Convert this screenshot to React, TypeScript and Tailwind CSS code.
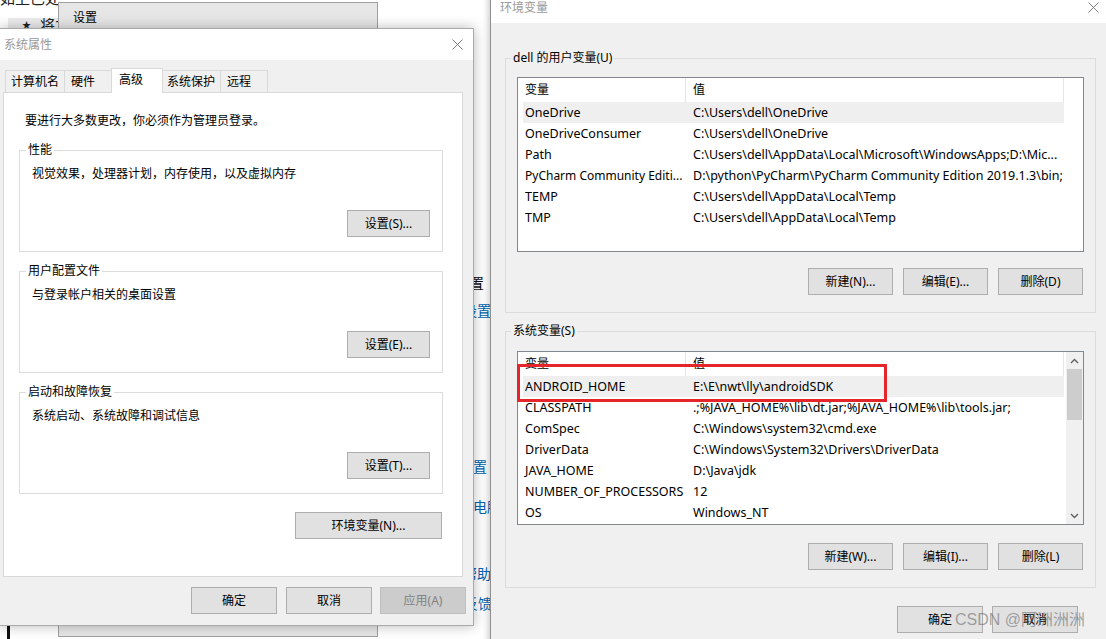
import React from 'react';

type Row = [string, string];

const userVars: Row[] = [
  ['OneDrive', 'C:\\Users\\dell\\OneDrive'],
  ['OneDriveConsumer', 'C:\\Users\\dell\\OneDrive'],
  ['Path', 'C:\\Users\\dell\\AppData\\Local\\Microsoft\\WindowsApps;D:\\Mic...'],
  ['PyCharm Community Editi...', 'D:\\python\\PyCharm\\PyCharm Community Edition 2019.1.3\\bin;'],
  ['TEMP', 'C:\\Users\\dell\\AppData\\Local\\Temp'],
  ['TMP', 'C:\\Users\\dell\\AppData\\Local\\Temp'],
];

const sysVars: Row[] = [
  ['ANDROID_HOME', 'E:\\E\\nwt\\lly\\androidSDK'],
  ['CLASSPATH', '.;%JAVA_HOME%\\lib\\dt.jar;%JAVA_HOME%\\lib\\tools.jar;'],
  ['ComSpec', 'C:\\Windows\\system32\\cmd.exe'],
  ['DriverData', 'C:\\Windows\\System32\\Drivers\\DriverData'],
  ['JAVA_HOME', 'D:\\Java\\jdk'],
  ['NUMBER_OF_PROCESSORS', '12'],
  ['OS', 'Windows_NT'],
];

const tabs = [
  { t: '计算机名', c: 'w-[60px] pl-[5px]', sel: false },
  { t: '硬件', c: 'w-[48px] pl-[6px]', sel: false },
  { t: '高级', c: 'w-[52px] pl-[7px]', sel: true },
  { t: '系统保护', c: 'w-[59px] pl-[4px]', sel: false },
  { t: '远程', c: 'w-[48px] pl-[6px]', sel: false },
];

function CloseX() {
  return (
    <svg width="11" height="11" viewBox="0 0 11 11" className="block">
      <path d="M0.5 0.5L10.5 10.5M10.5 0.5L0.5 10.5" stroke="#7d7d7d" strokeWidth="1" fill="none" />
    </svg>
  );
}

function Btn({
  w,
  children,
  disabled = false,
  className = '',
}: {
  w: string;
  children: React.ReactNode;
  disabled?: boolean;
  className?: string;
}) {
  return (
    <div
      className={`${w} h-[27px] shrink-0 flex items-center justify-center border leading-[16px] whitespace-nowrap ${
        disabled ? 'border-[#bfbfbf] bg-[#cccccc] text-[#838383]' : 'border-[#adadad] bg-[#e1e1e1] text-black'
      } ${className}`}
    >
      {children}
    </div>
  );
}

function Group({
  label,
  labelCls,
  className,
  children,
}: {
  label: string;
  labelCls: string;
  className: string;
  children: React.ReactNode;
}) {
  return (
    <div className={`relative shrink-0 border border-[#dcdcdc] flex flex-col ${className}`}>
      <span className={`absolute -top-[9px] px-[2px] leading-[16px] whitespace-nowrap ${labelCls}`}>{label}</span>
      {children}
    </div>
  );
}

function Chevron({ up }: { up: boolean }) {
  return (
    <svg width="9" height="6" viewBox="0 0 9 6" className="block">
      <path d={up ? 'M1 5L4.5 1.5L8 5' : 'M1 1L4.5 4.5L8 1'} stroke="#606060" strokeWidth="1.4" fill="none" />
    </svg>
  );
}

function Scrollbar() {
  return (
    <div className="w-[17px] shrink-0 flex flex-col bg-[#f0f0f0]">
      <div className="h-[17px] flex items-center justify-center">
        <Chevron up />
      </div>
      <div className="mx-[1px] h-[51px] bg-[#cdcdcd]" />
      <div className="flex-1" />
      <div className="h-[17px] flex items-center justify-center">
        <Chevron up={false} />
      </div>
    </div>
  );
}

function ListView({ rows, h, scroll = false }: { rows: Row[]; h: string; scroll?: boolean }) {
  return (
    <div className={`w-[567px] ${h} shrink-0 border border-[#828790] bg-white flex overflow-hidden`}>
      <div className="w-[548px] shrink-0 flex flex-col">
        <div className="h-[24px] flex shrink-0">
          <div className="w-[168px] pl-[7px] flex items-center border-r border-[#e5e5e5]">变量</div>
          <div className="w-[378px] pl-[7px] flex items-center border-r border-[#e5e5e5]">值</div>
        </div>
        {rows.map(([k, v], i) => (
          <div
            key={k}
            className={`ml-[5px] w-[541px] h-[21px] shrink-0 flex items-center ${i === 0 ? 'bg-[#efefef]' : ''}`}
          >
            <div
              className={`w-[163px] shrink-0 pl-[2px] whitespace-nowrap overflow-hidden ${
                k.endsWith('...') ? 'text-[12px]' : 'text-[12.5px]'
              }`}
            >
              {k}
            </div>
            <div className="w-[378px] shrink-0 pl-[7px] whitespace-nowrap overflow-hidden text-[12.5px]">{v}</div>
          </div>
        ))}
      </div>
      {scroll && <Scrollbar />}
    </div>
  );
}

function SysGroup({ label, text, btn, first = false }: { label: string; text: string; btn: string; first?: boolean }) {
  return (
    <Group
      label={label}
      labelCls="left-[6px] bg-white"
      className={`ml-[15px] w-[424px] h-[102px] ${first ? 'mt-[21px]' : 'mt-[19px]'}`}
    >
      <div className="pl-[12px] pt-[15px] leading-[16px]">{text}</div>
      <Btn w="w-[83px]" className="self-end mr-[12px] mt-[28px]">
        {btn}
      </Btn>
    </Group>
  );
}

export default function App() {
  return (
    <div className="relative w-[1106px] h-[639px] overflow-hidden bg-white font-['Noto_Sans','Noto_Sans_CJK_SC',sans-serif] text-[12px] leading-[16px] text-black">
      {/* desktop background fragments */}
      <div className="absolute left-0 top-[-10px] text-[15px] leading-[16px] text-[#222] whitespace-nowrap">如上已处</div>
      <div className="absolute left-[8px] top-[18px] w-[60px] h-[14px] bg-[#ebebeb] flex items-center pl-[14px] gap-[9px] text-[15px] leading-[16px] text-[#222] whitespace-nowrap">
        <span className="text-[9px]">★</span>
        <span>将才</span>
      </div>
      <div className="absolute left-[7px] top-[600px] w-[3px] h-[39px] bg-[#111]" />

      {/* 设置 window behind */}
      <div className="absolute left-[58px] top-[2px] w-[320px] h-[635px] bg-[#e6e6e6] border border-[#a0a0a0]">
        <div className="h-[30px] pl-[14px] flex items-center">设置</div>
      </div>

      {/* settings page behind (links) */}
      <div className="absolute left-[378px] top-0 w-[132px] h-[639px] flex flex-col items-end whitespace-nowrap">
        <div className="mt-[273px] mr-[26px] h-[20px] leading-[20px] text-[15px] text-[#111]">相关设置</div>
        <div className="mt-[8px] mr-[19px] h-[20px] leading-[20px] text-[14px] text-[#0063b1]">BitLocker 设置</div>
        <div className="mt-[136px] mr-[23px] h-[20px] leading-[20px] text-[14px] text-[#0063b1]">高级系统设置</div>
        <div className="mt-[20px] mr-[9px] h-[20px] leading-[20px] text-[14px] text-[#0063b1]">重命名这台电脑</div>
        <div className="mt-[47px] mr-[19px] h-[20px] leading-[20px] text-[14px] text-[#0063b1]">获取帮助</div>
        <div className="mt-[10px] mr-[18px] h-[20px] leading-[20px] text-[14px] text-[#0063b1]">提供反馈</div>
      </div>

      {/* 系统属性 window */}
      <div className="absolute left-[-1px] top-[28px] w-[475px] h-[598px] border border-[#aaaaaa] bg-[#f0f0f0] flex flex-col shadow-[0_0_12px_rgba(0,0,0,0.28)]">
        <div className="h-[31px] shrink-0 bg-white flex items-center justify-between pl-[4px] pr-[10px]">
          <span className="text-[#999999]">系统属性</span>
          <CloseX />
        </div>
        <div className="pt-[8px] flex flex-col">
          <div className="relative z-10 flex items-end h-[24px] pl-[5px]">
            {tabs.map((tb, i) =>
              tb.sel ? (
                <div
                  key={tb.t}
                  className={`${tb.c} ${i > 0 ? '-ml-px' : ''} h-[25px] mb-[-1px] pb-[2px] bg-white border border-b-0 border-[#d9d9d9] flex items-center relative z-10`}
                >
                  {tb.t}
                </div>
              ) : (
                <div
                  key={tb.t}
                  className={`${tb.c} ${i > 0 ? '-ml-px' : ''} h-[22px] bg-[#f0f0f0] border border-b-0 border-[#d9d9d9] flex items-center`}
                >
                  {tb.t}
                </div>
              )
            )}
          </div>
          <div className="ml-[3px] w-[460px] h-[485px] shrink-0 border border-[#d9d9d9] bg-white flex flex-col">
            <div className="ml-[21px] mt-[20px] leading-[16px]">要进行大多数更改，你必须作为管理员登录。</div>
            <SysGroup first label="性能" text="视觉效果，处理器计划，内存使用，以及虚拟内存" btn="设置(S)..." />
            <SysGroup label="用户配置文件" text="与登录帐户相关的桌面设置" btn="设置(E)..." />
            <SysGroup label="启动和故障恢复" text="系统启动、系统故障和调试信息" btn="设置(T)..." />
            <Btn w="w-[147px]" className="self-end mr-[20px] mt-[18px]">
              环境变量(N)...
            </Btn>
          </div>
          <div className="mt-[10px] flex pl-[191px]">
            <Btn w="w-[86px]">确定</Btn>
            <Btn w="w-[86px]" className="ml-[9px]">
              取消
            </Btn>
            <Btn w="w-[86px]" className="ml-[8px]" disabled>
              应用(A)
            </Btn>
          </div>
        </div>
      </div>

      {/* 环境变量 window */}
      <div className="absolute left-[490px] top-[-8px] w-[616px] h-[660px] border-l border-[#8f8f8f] bg-[#f0f0f0] flex flex-col shadow-[-2px_0_6px_rgba(0,0,0,0.2)]">
        <div className="h-[31px] shrink-0 bg-white flex items-center justify-between pl-[9px] pr-[7px]">
          <span className="text-[#999999]">环境变量</span>
          <CloseX />
        </div>
        <div className="flex flex-col pl-[14px]">
          <Group label="dell 的用户变量(U)" labelCls="left-[5px] bg-[#f0f0f0]" className="mt-[35px] w-[591px] h-[255px] pl-[11px] pt-[18px]">
            <ListView rows={userVars} h="h-[175px]" />
            <div className="mt-[16px] ml-[291px] flex">
              <Btn w="w-[85px]">新建(N)...</Btn>
              <Btn w="w-[85px]" className="ml-[10px]">
                编辑(E)...
              </Btn>
              <Btn w="w-[85px]" className="ml-[10px]">
                删除(D)
              </Btn>
            </div>
          </Group>
          <Group label="系统变量(S)" labelCls="left-[5px] bg-[#f0f0f0]" className="mt-[18px] w-[591px] h-[257px] pl-[11px] pt-[19px]">
            <ListView rows={sysVars} h="h-[174px]" scroll />
            <div className="mt-[18px] ml-[291px] flex">
              <Btn w="w-[85px]">新建(W)...</Btn>
              <Btn w="w-[85px]" className="ml-[10px]">
                编辑(I)...
              </Btn>
              <Btn w="w-[85px]" className="ml-[10px]">
                删除(L)
              </Btn>
            </div>
          </Group>
          <div className="mt-[18px] ml-[392px] flex">
            <Btn w="w-[86px]">确定</Btn>
            <Btn w="w-[86px]" className="ml-[9px]">
              取消
            </Btn>
          </div>
        </div>
      </div>

      {/* red annotation box */}
      <div className="absolute left-[517px] top-[364px] w-[370px] h-[38px] border-[3px] border-[#e4262c]" />

      {/* watermark */}
      <div className="absolute left-[955px] top-[610px] text-[16px] leading-[20px] text-[rgba(95,95,95,0.55)] font-['Liberation_Sans','Noto_Sans_CJK_SC',sans-serif] whitespace-nowrap">
        CSDN @阿洲洲洲
      </div>
    </div>
  );
}
